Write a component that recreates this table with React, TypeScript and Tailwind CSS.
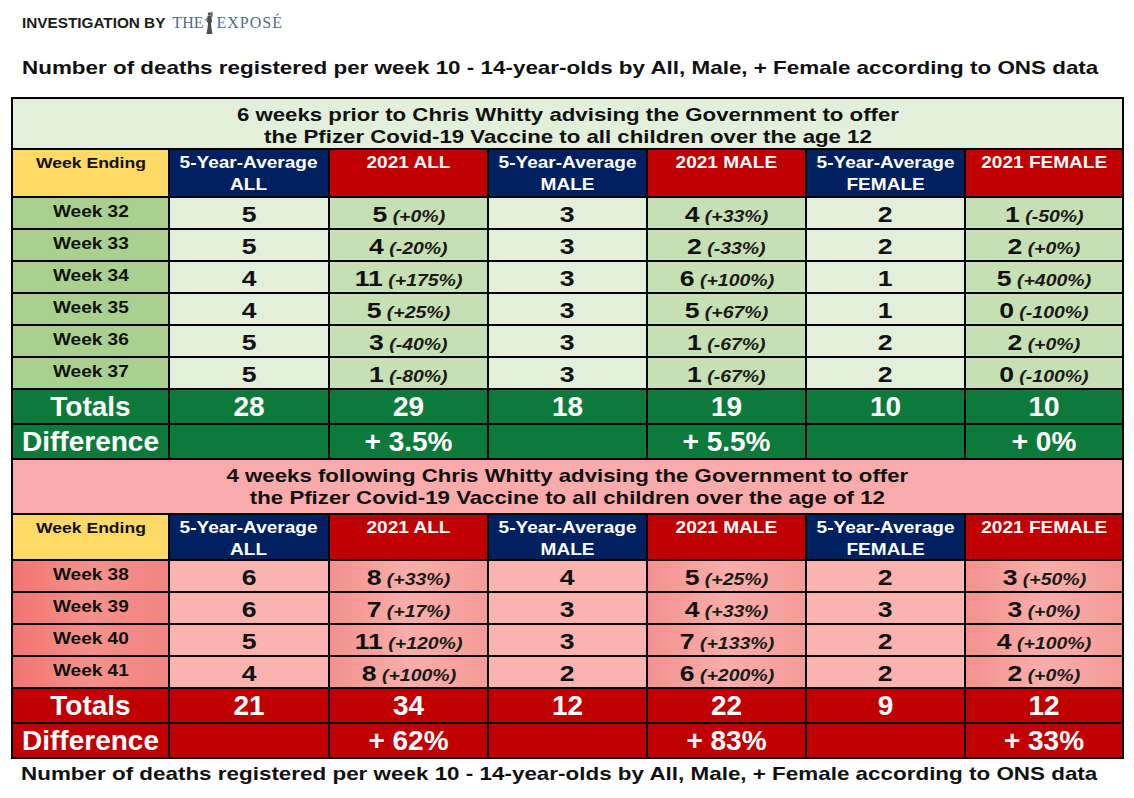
import React from "react";

type Cell = [number, string];
type Row = { week: string; a: number; all: Cell; m: number; male: Cell; f: number; fem: Cell };

const greenRows: Row[] = [
  { week: "Week 32", a: 5, all: [5, "(+0%)"], m: 3, male: [4, "(+33%)"], f: 2, fem: [1, "(-50%)"] },
  { week: "Week 33", a: 5, all: [4, "(-20%)"], m: 3, male: [2, "(-33%)"], f: 2, fem: [2, "(+0%)"] },
  { week: "Week 34", a: 4, all: [11, "(+175%)"], m: 3, male: [6, "(+100%)"], f: 1, fem: [5, "(+400%)"] },
  { week: "Week 35", a: 4, all: [5, "(+25%)"], m: 3, male: [5, "(+67%)"], f: 1, fem: [0, "(-100%)"] },
  { week: "Week 36", a: 5, all: [3, "(-40%)"], m: 3, male: [1, "(-67%)"], f: 2, fem: [2, "(+0%)"] },
  { week: "Week 37", a: 5, all: [1, "(-80%)"], m: 3, male: [1, "(-67%)"], f: 2, fem: [0, "(-100%)"] },
];

const pinkRows: Row[] = [
  { week: "Week 38", a: 6, all: [8, "(+33%)"], m: 4, male: [5, "(+25%)"], f: 2, fem: [3, "(+50%)"] },
  { week: "Week 39", a: 6, all: [7, "(+17%)"], m: 3, male: [4, "(+33%)"], f: 3, fem: [3, "(+0%)"] },
  { week: "Week 40", a: 5, all: [11, "(+120%)"], m: 3, male: [7, "(+133%)"], f: 2, fem: [4, "(+100%)"] },
  { week: "Week 41", a: 4, all: [8, "(+100%)"], m: 2, male: [6, "(+200%)"], f: 2, fem: [2, "(+0%)"] },
];

type Theme = {
  title: string;
  label: string;
  avg: string;
  cur: string;
  total: string;
  titleH: string;
  headH: string;
};

const green: Theme = {
  title: "bg-[#e2efda]",
  label: "bg-[#a9d08e]",
  avg: "bg-[#e2efda]",
  cur: "bg-[#c6e0b4]",
  total: "bg-[#0d7a3b]",
  titleH: "h-[49px]",
  headH: "h-[46px]",
};

const pink: Theme = {
  title: "bg-[#f8abaa]",
  label: "bg-gradient-to-r from-[#ef7570] via-[#f4918c] to-[#f28480]",
  avg: "bg-[#f9b4b0]",
  cur: "bg-gradient-to-r from-[#f4918d] via-[#f8aeaa] to-[#f59b97]",
  total: "bg-[#c00000]",
  titleH: "h-[53px]",
  headH: "h-[44px]",
};

function Val({ n, p, bg }: { n: number; p?: string; bg: string }) {
  return (
    <div className={`${bg} h-[30px] flex justify-center pt-[6px] leading-none`}>
      <span className="inline-block scale-x-[1.18] whitespace-nowrap font-bold text-[#111]">
        <span className="text-[22.5px]">{n}</span>
        {p && <span className="text-[16.5px] italic text-[#1a1a1a]">{" " + p}</span>}
      </span>
    </div>
  );
}

function Head({ lines, bg, dark }: { lines: string[]; bg: string; dark?: boolean }) {
  return (
    <div className={`${bg} flex justify-center pt-[2px]`}>
      <span
        className={`inline-block text-center whitespace-nowrap font-bold ${
          dark ? "text-[15px] scale-x-[1.17] text-[#111]" : "text-[17px] scale-x-[1.12] text-white"
        } leading-[22px]`}
      >
        {lines.map((l, i) => (
          <span key={i} className="block">
            {l}
          </span>
        ))}
      </span>
    </div>
  );
}

function Big({ text, bg }: { text: string; bg: string }) {
  return (
    <div className={`${bg} flex items-center justify-center`}>
      <span className="text-[28px] leading-none font-bold text-white whitespace-nowrap">{text}</span>
    </div>
  );
}

function Section({ theme, title, rows, totals, diffs }: { theme: Theme; title: string[]; rows: Row[]; totals: number[]; diffs: string[] }) {
  return (
    <>
      <div className={`col-span-7 ${theme.title} ${theme.titleH} flex justify-center pt-[5px]`}>
        <span className="inline-block scale-x-[1.17] text-center text-[19px] leading-[22px] font-bold text-[#111] whitespace-nowrap">
          {title.map((l, i) => (
            <span key={i} className="block">
              {l}
            </span>
          ))}
        </span>
      </div>
      <Head lines={["Week Ending"]} bg={`bg-[#ffd966] ${theme.headH}`} dark />
      <Head lines={["5-Year-Average", "ALL"]} bg={`bg-[#002060] ${theme.headH}`} />
      <Head lines={["2021 ALL"]} bg={`bg-[#c00000] ${theme.headH}`} />
      <Head lines={["5-Year-Average", "MALE"]} bg={`bg-[#002060] ${theme.headH}`} />
      <Head lines={["2021 MALE"]} bg={`bg-[#c00000] ${theme.headH}`} />
      <Head lines={["5-Year-Average", "FEMALE"]} bg={`bg-[#002060] ${theme.headH}`} />
      <Head lines={["2021 FEMALE"]} bg={`bg-[#c00000] ${theme.headH}`} />
      {rows.map((r) => (
        <React.Fragment key={r.week}>
          <div className={`${theme.label} h-[30px] flex justify-center pt-[5px] leading-none`}>
            <span className="inline-block scale-x-[1.12] text-[17px] font-bold text-[#111]">{r.week}</span>
          </div>
          <Val n={r.a} bg={theme.avg} />
          <Val n={r.all[0]} p={r.all[1]} bg={theme.cur} />
          <Val n={r.m} bg={theme.avg} />
          <Val n={r.male[0]} p={r.male[1]} bg={theme.cur} />
          <Val n={r.f} bg={theme.avg} />
          <Val n={r.fem[0]} p={r.fem[1]} bg={theme.cur} />
        </React.Fragment>
      ))}
      <Big text="Totals" bg={`${theme.total} h-[33px]`} />
      {totals.map((t, i) => (
        <Big key={i} text={String(t)} bg={`${theme.total} h-[33px]`} />
      ))}
      <Big text="Difference" bg={`${theme.total} h-[33px]`} />
      {diffs.map((d, i) => (
        <Big key={i} text={d} bg={`${theme.total} h-[33px]`} />
      ))}
    </>
  );
}

function Figure() {
  return (
    <svg width="11" height="24" viewBox="0 0 11 24" className="inline-block align-[-7px] mx-[1px]">
      <circle cx="5.5" cy="3" r="1.8" fill="#5a5a5a" />
      <path d="M7 1 L8.5 0.5 L8.8 5.5 L7.2 6 Z" fill="#6a6a6a" />
      <path d="M3.5 5 Q5.5 4.2 7.5 5 L8 11 L7 12 L7.5 17 L8.5 23 L2.5 23 L3.5 17 L4 12 L3 11 Z" fill="#4e4e4e" />
      <path d="M3 6 L1 9 L2 10 L4 8 Z" fill="#7a7a7a" />
    </svg>
  );
}

export default function App() {
  return (
    <div className="w-[1134px] h-[798px] overflow-hidden bg-white font-['Liberation_Sans',Arial,sans-serif] text-black">
      <div className="h-[30px] pt-[11px] pl-[22px] whitespace-nowrap">
        <span className="text-[15.3px] leading-[15px] font-bold text-[#1c1c1c]">INVESTIGATION BY</span>
        <span className="ml-[7px] font-['Liberation_Serif',serif] text-[16px] leading-none text-[#4f6b89]">THE</span>
        <Figure />
        <span className="font-['Liberation_Serif',serif] text-[16px] leading-none tracking-[1px] text-[#4f6b89]">EXPOSÉ</span>
      </div>
      <div className="mt-[28px] h-[19px] pl-[22px] text-[19px] leading-[19px] font-bold text-[#111] whitespace-nowrap">
        <span className="inline-block origin-left scale-x-[1.18]">
          Number of deaths registered per week 10 - 14-year-olds by All, Male, + Female according to ONS data
        </span>
      </div>
      <div className="mt-[20px] ml-[11px] w-[1113px] grid grid-cols-[155px_158px_157px_157px_157px_157px_156px] gap-[2px] bg-black p-[2px]">
        <Section
          theme={green}
          title={[
            "6 weeks prior to Chris Whitty advising the Government to offer",
            "the Pfizer Covid-19 Vaccine to all children over the age 12",
          ]}
          rows={greenRows}
          totals={[28, 29, 18, 19, 10, 10]}
          diffs={["", "+ 3.5%", "", "+ 5.5%", "", "+ 0%"]}
        />
        <Section
          theme={pink}
          title={[
            "4 weeks following Chris Whitty advising the Government to offer",
            "the Pfizer Covid-19 Vaccine to all children over the age of 12",
          ]}
          rows={pinkRows}
          totals={[21, 34, 12, 22, 9, 12]}
          diffs={["", "+ 62%", "", "+ 83%", "", "+ 33%"]}
        />
      </div>
      <div className="mt-[5px] h-[19px] pl-[21px] text-[19px] leading-[19px] font-bold text-[#111] whitespace-nowrap">
        <span className="inline-block origin-left scale-x-[1.18]">
          Number of deaths registered per week 10 - 14-year-olds by All, Male, + Female according to ONS data
        </span>
      </div>
    </div>
  );
}
